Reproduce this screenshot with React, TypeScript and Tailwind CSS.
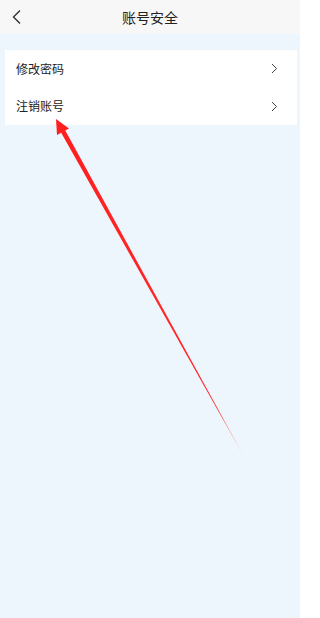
import React from 'react'

const rows = ['修改密码', '注销账号']

const Chevron = ({ dir }: { dir: 'left' | 'right' }) => (
  <svg
    width={dir === 'left' ? 12 : 8}
    height={dir === 'left' ? 16 : 11}
    viewBox={dir === 'left' ? '0 0 12 16' : '0 0 8 11'}
    fill="none"
    stroke={dir === 'left' ? '#333' : '#444'}
    strokeWidth={dir === 'left' ? 1.4 : 1}
  >
    {dir === 'left' ? <path d="M9 1.5 L2.5 8 L9 14.5" /> : <path d="M2 1 L6.5 5.5 L2 10" />}
  </svg>
)

const Arrow = () => (
  <svg className="absolute left-0 top-0 pointer-events-none" width={300} height={618}>
    <defs>
      <linearGradient id="fade" x1="56" y1="119" x2="247" y2="462" gradientUnits="userSpaceOnUse">
        <stop offset="0" stopColor="#ff1f1f" />
        <stop offset="0.85" stopColor="#ff2a2a" />
        <stop offset="1" stopColor="#ff2a2a" stopOpacity="0.05" />
      </linearGradient>
    </defs>
    <polygon points="56,119 69,128.5 57,135" fill="#ff1f1f" />
    <polygon points="65,130 61,132.5 247,462" fill="url(#fade)" />
  </svg>
)

export default function App() {
  return (
    <div
      className="relative w-[300px] h-[618px] bg-[#eef6fd] overflow-hidden"
      style={{ fontFamily: '"Noto Sans CJK SC", "Noto Sans", sans-serif' }}
    >
      <div className="relative h-[34px] bg-[#f7f7f7] flex items-center justify-center">
        <div className="absolute left-[11px] top-[9px]">
          <Chevron dir="left" />
        </div>
        <span className="text-[14px] text-[#222]">账号安全</span>
      </div>
      <div className="mt-[16px] ml-[5px] mr-[3px] bg-white">
        {rows.map((r) => (
          <div key={r} className="h-[37.5px] flex items-center justify-between pl-[11px] pr-[19px]">
            <span className="text-[12px] text-[#222]">{r}</span>
            <Chevron dir="right" />
          </div>
        ))}
      </div>
      <Arrow />
    </div>
  )
}
